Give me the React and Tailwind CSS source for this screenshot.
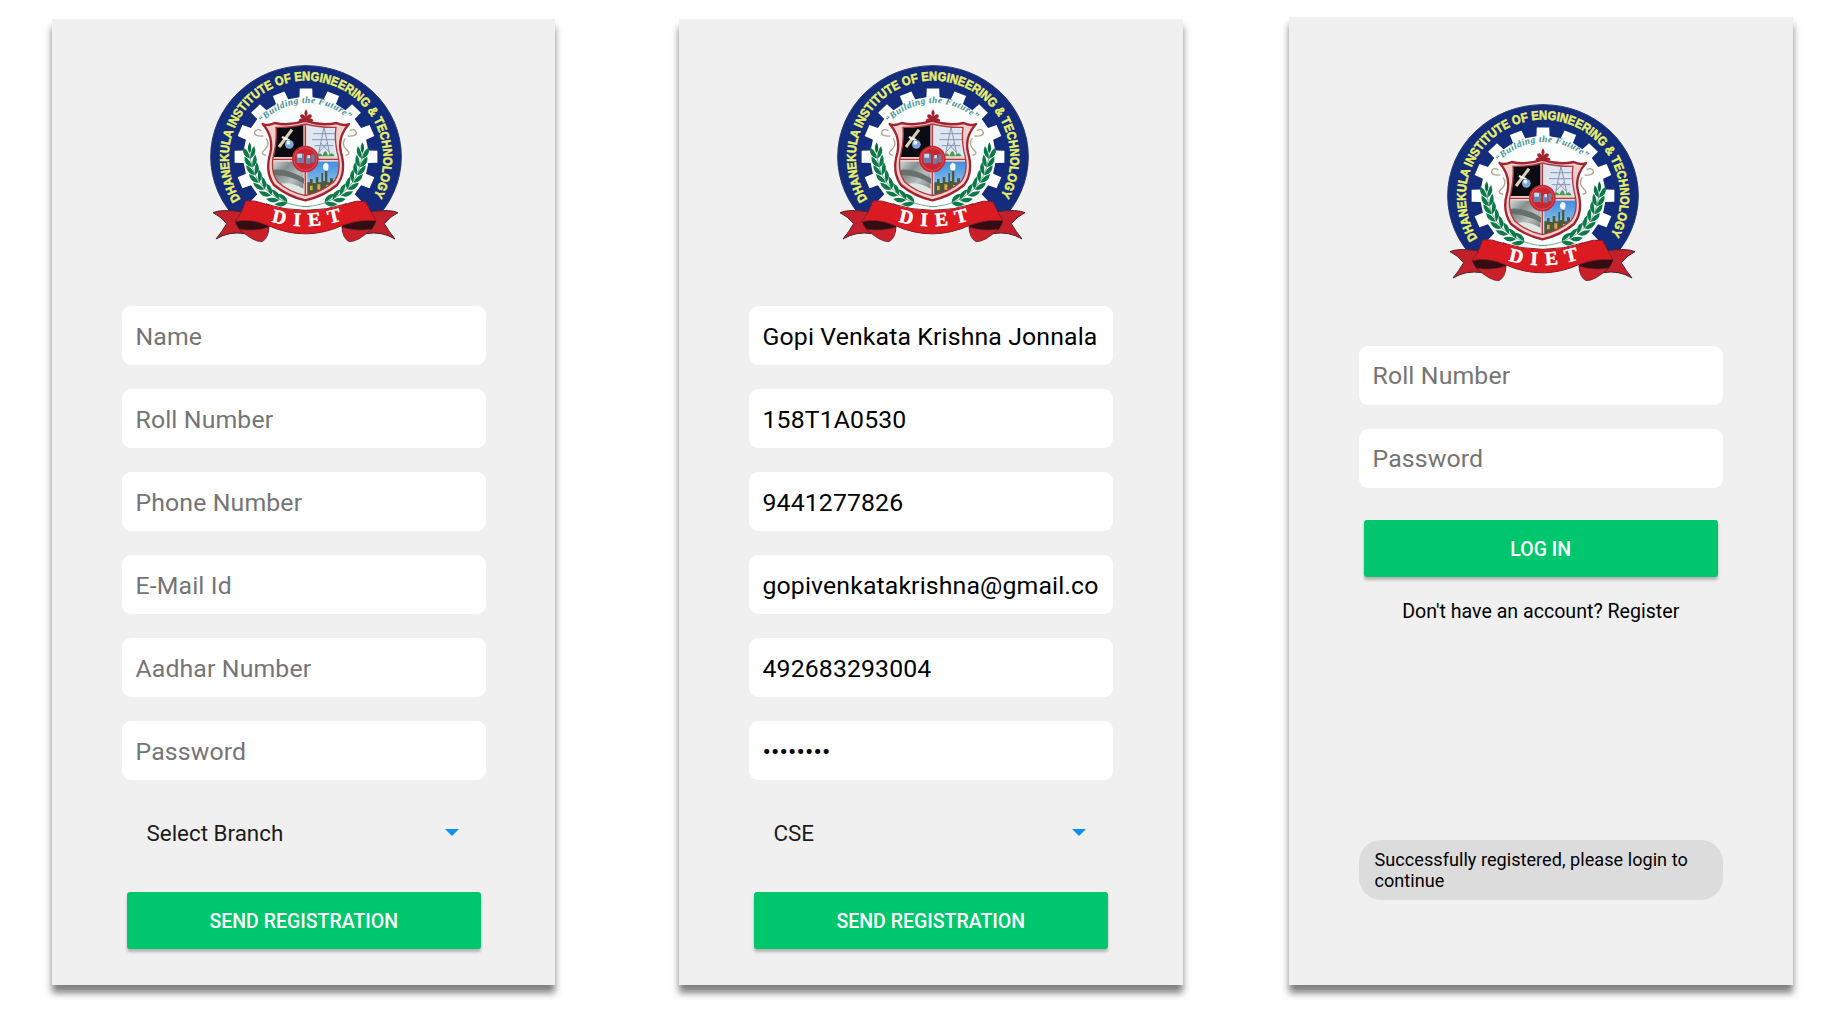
import React from "react";

const CX = 318;
const CY = 317;

function polar(r, deg) {
  const a = (deg * Math.PI) / 180;
  return [CX + r * Math.cos(a), CY + r * Math.sin(a)];
}

// Sixteen-tooth gear outline
const gearPoints = Array.from({ length: 16 }, (_, i) => {
  const c = i * 22.5;
  return [polar(188, c - 6), polar(215, c - 5), polar(215, c + 5), polar(188, c + 6)];
})
  .flat()
  .map((p) => p.map((n) => n.toFixed(1)).join(","))
  .join(" ");

// Leaves of the left laurel: x, y, rotation
const leaves = [
  [149, 296, -4], [154, 322, -8], [161, 346, -14], [171, 369, -22], [185, 391, -32], [203, 411, -44], [225, 427, -58], [248, 438, -70],
];

function Laurel({ flip }) {
  return (
    <g transform={flip ? "translate(636 0) scale(-1 1)" : undefined}>
      <path d="M149 285 Q152 400 262 444 Q300 456 330 455" fill="none" stroke="#5b9c7c" strokeWidth="2.5" />
      {leaves.map(([x, y, r]) => (
        <g key={y} transform={`translate(${x} ${y}) rotate(${r})`} fill="#0b7a48">
          <path d="M0 15 Q-24 7 -18 -20 Q-1 -8 0 15Z" />
          <path d="M1 15 Q24 4 15 -22 Q2 -8 1 15Z" />
        </g>
      ))}
      <path d="M149 262 q-11 18 0 32 q10 -14 0 -32Z" fill="#0b6a3f" />
    </g>
  );
}

function RibbonTail({ flip }) {
  return (
    <g transform={flip ? "translate(633 0) scale(-1 1)" : undefined}>
      <path d="M39 473 Q62 462 124 470 L110 510 L134 536 Q88 528 48 552 Q66 530 80 506 Q62 484 39 473Z" fill="#c4202b" stroke="#4b2530" strokeWidth="3" />
      <path d="M104 498 Q150 488 208 511 L206 530 Q160 544 118 524Z" fill="#330d12" />
      <path d="M118 522 Q165 530 207 516 Q206 550 186 560 Q160 562 118 522Z" fill="#c9202a" stroke="#5a2028" strokeWidth="2" />
    </g>
  );
}

function Crest() {
  return (
    <svg viewBox="0 0 630 600" className="block h-[200px] w-[210px] shrink-0" role="img" aria-label="DIET">
      <defs>
        <clipPath id="ring"><path d="M0 0H630V485L500 505H130L0 485Z" /></clipPath>
        <clipPath id="shield"><path d="M228 217 Q275 218 316 207 Q360 218 408 217 Q403 250 411 290 Q428 350 400 382 Q365 412 316 422 Q268 412 234 382 Q208 345 222 295 Q231 255 228 217Z" /></clipPath>
        <linearGradient id="town" x1="0" y1="0" x2="0" y2="1">
          <stop offset="0" stopColor="#3f8fe0" />
          <stop offset="1" stopColor="#b9dcf5" />
        </linearGradient>
        <linearGradient id="river" x1="0" y1="0" x2="1" y2="1">
          <stop offset="0" stopColor="#e8efec" />
          <stop offset=".35" stopColor="#848f8e" />
          <stop offset=".6" stopColor="#b9c0bf" />
          <stop offset="1" stopColor="#5b6663" />
        </linearGradient>
        <path id="ringText" d="M122 433 A232 232 0 1 1 514 433" />
        <path id="motto" d="M186 203 A184 184 0 0 1 456 203" />
        <path id="banner" d="M214 500 Q318 530 434 494" />
      </defs>

      <g transform="translate(0 2.3) scale(1 .955)">
        <g clipPath="url(#ring)">
          <circle cx={CX} cy={CY} r="286" fill="#142c7c" stroke="#26366f" strokeWidth="3" />
          <polygon points={gearPoints} fill="#fff" />
          <circle cx={CX} cy={CY} r="172" fill="#fbfefd" />
        </g>
      </g>
      <text fill="#e9f06a" stroke="#e9f06a" strokeWidth="1.6" fontFamily="'Liberation Sans Narrow', 'Liberation Sans', sans-serif" fontWeight="700" fontSize="38">
        <textPath href="#ringText" textLength="978" lengthAdjust="spacingAndGlyphs">DHANEKULA INSTITUTE OF ENGINEERING &amp; TECHNOLOGY</textPath>
      </text>
      <text fill="#3c9092" fontFamily="'Liberation Serif', serif" fontStyle="italic" fontWeight="700" fontSize="28">
        <textPath href="#motto" textLength="288" lengthAdjust="spacing">“Building the Future”</textPath>
      </text>

      <Laurel />
      <Laurel flip />

      {/* scroll ornaments beside the shield */}
      <g fill="none" stroke="#b3a58d" strokeWidth="4">
        <path d="M190 243 q-28 2 -26 -12 q6 -12 20 -4 M198 250 q14 18 -4 34 q-16 14 4 17" />
        <path d="M443 243 q28 2 26 -12 q-6 -12 -20 -4 M436 250 q-14 18 4 34 q16 14 -4 17" />
      </g>

      {/* shield */}
      <path d="M188 207 Q205 214 224 204 Q270 214 316 197 Q362 214 410 204 Q428 214 447 207 Q412 246 423 292 Q440 352 411 390 Q370 424 316 436 Q262 424 222 390 Q194 350 211 294 Q222 246 188 207Z" fill="#f0cfcc" stroke="#a3232f" strokeWidth="7" strokeLinejoin="round" />
      <g clipPath="url(#shield)">
        <rect x="200" y="200" width="110" height="106" fill="#0c0b12" />
        <path d="M237 276 L276 224" stroke="#d9d3b0" strokeWidth="9" />
        <path d="M246 246 L268 256" stroke="#f2f2f2" strokeWidth="7" />
        <circle cx="268" cy="268" r="13" fill="#7ea6d6" />
        <circle cx="265" cy="263" r="6" fill="#eaf2fa" />
        <rect x="322" y="200" width="110" height="106" fill="#dfe6f3" />
        <path d="M372 216 L355 300 M372 216 L390 300 M340 236 H404 M336 254 H408 M344 272 H400 M362 264 L388 292 M382 264 L356 292" stroke="#8798ad" strokeWidth="3" fill="none" />
        <path d="M350 304 q8 -18 18 -2 q8 -26 16 0 q12 -16 20 2Z" fill="#4e9a4b" />
        <rect x="200" y="320" width="110" height="110" fill="url(#river)" />
        <path d="M215 345 Q260 338 312 370 V386 Q260 356 212 362Z" fill="#66706d" />
        <path d="M215 395 Q262 372 312 402 V428 H215Z" fill="#dfe7e5" />
        <rect x="322" y="320" width="110" height="110" fill="url(#town)" />
        <path d="M372 345 q-8 -14 4 -22 q16 2 6 24Z" fill="#f4f8fb" />
        <path d="M322 382 h8 v-10 h8 v12 h9 v-18 h8 v16 h9 v-28 h5 v24 h6 v-30 h7 v34 h8 v-12 h9 v12 h12 v44 h-89Z" fill="#4a5a3a" />
        <path d="M330 392 h8 v14 h-8Z M352 388 h9 v16 h-9Z M378 390 h10 v14 h-10Z" fill="#dba54a" />
      </g>
      <path d="M228 217 Q275 218 316 207 Q360 218 408 217 Q403 250 411 290 Q428 350 400 382 Q365 412 316 422 Q268 412 234 382 Q208 345 222 295 Q231 255 228 217Z M316 207V422 M220 313H414" fill="none" stroke="#b03a42" strokeWidth="4" />
      <circle cx="316" cy="312" r="40" fill="#c92632" />
      <circle cx="316" cy="312" r="34" fill="none" stroke="#e0666b" strokeWidth="2" />
      <path d="M290 296 h22 v28 h-22Z M318 304 h14 v22 h-14Z M334 298 h10 v24 h-10Z" fill="#6e7fa3" />
      <path d="M292 296 h14 v12 h-14Z M322 300 h8 v10 h-8Z" fill="#c8dcec" />
      <path d="M318 163 q9 12 1 22 q8 -12 16 -5 q2 10 -9 10 q12 -2 14 8 q-22 8 -44 0 q2 -10 14 -8 q-11 0 -9 -10 q8 -7 16 5 q-8 -10 1 -22Z" fill="#a3202d" />

      <RibbonTail />
      <RibbonTail flip />
      <path d="M137 438 Q163 434 192 446 Q318 486 442 446 Q470 434 497 440 Q510 468 528 497 Q480 492 430 510 Q318 562 205 512 Q150 488 105 500 Q128 472 137 438Z" fill="#dc1a22" stroke="#8c1a26" strokeWidth="3" />
      <text fill="#fff" fontFamily="'Liberation Serif', serif" fontWeight="700" fontSize="58" stroke="#fff" strokeWidth="1.5">
        <textPath href="#banner" textLength="214" lengthAdjust="spacing">DIET</textPath>
      </text>
    </svg>
  );
}

function Phone({ className, children }) {
  return (
    <section className={`flex flex-col bg-[#f0f0f0] shadow-[0_8px_7px_rgba(0,0,0,0.5)] ${className}`}>
      {children}
    </section>
  );
}

function Field({ value, filled }) {
  return (
    <div className={`flex h-[59px] items-center overflow-hidden rounded-[9px] bg-white px-[14px] text-[24.8px] leading-[28px] tracking-[0.14px] whitespace-nowrap ${filled ? "text-black" : "text-[#757575]"}`}>
      <span className="pt-[2px]">{value}</span>
    </div>
  );
}

function Button({ children, className }) {
  return (
    <button className={`mx-[5.5px] flex h-[57px] items-center justify-center rounded-[3px] bg-[#00c66d] pt-[3px] text-[19.5px] font-medium text-white shadow-[0_3px_3px_rgba(0,0,0,0.25)] ${className}`}>
      {children}
    </button>
  );
}

function Registration({ className, fields, filled, branch }) {
  return (
    <Phone className={`h-[966px] ${className}`}>
      <div className="ml-[148px] pt-[36px]"><Crest /></div>
      <form className="mt-[51px] ml-[69.5px] flex w-[364.5px] flex-col">
        <div className="flex flex-col gap-6">
          {fields.map((f) => (
            <Field key={f} value={f} filled={filled} />
          ))}
        </div>
        <div className="mt-[36px] flex h-[34px] items-center justify-between pr-[27px] pl-[25px] text-[22.4px] leading-[34px] text-[#1c1c1c]">
          <span>{branch}</span>
          <svg viewBox="0 0 14 7" className="mb-px h-[7px] w-[14px]"><path d="M0 0H14L7 7Z" fill="#0a91f2" /></svg>
        </div>
        <Button className="mt-[42px]">SEND REGISTRATION</Button>
      </form>
    </Phone>
  );
}

export default function App() {
  return (
    <main className="flex h-[1021px] w-[1842px] items-start overflow-hidden bg-white pl-[52px] font-['Roboto',sans-serif]">
      <Registration
        className="mt-[19px] w-[503px]"
        fields={["Name", "Roll Number", "Phone Number", "E-Mail Id", "Aadhar Number", "Password"]}
        branch="Select Branch"
      />
      <Registration
        className="mt-[19px] ml-[124px] w-[504px]"
        filled
        fields={["Gopi Venkata Krishna Jonnala", "158T1A0530", "9441277826", "gopivenkatakrishna@gmail.co", "492683293004", "••••••••"]}
        branch="CSE"
      />
      <Phone className="mt-[17px] ml-[106px] h-[968px] w-[504px]">
        <div className="ml-[148px] pt-[77px]"><Crest /></div>
        <div className="mt-[51.5px] ml-[69.5px] flex w-[364.5px] flex-col">
          <div className="flex flex-col gap-6">
            <Field value="Roll Number" />
            <Field value="Password" />
          </div>
          <Button className="mt-[32px]">LOG IN</Button>
          <p className="mt-[23.5px] text-center text-[19.6px] leading-[24px] text-black">Don't have an account? Register</p>
          <div className="mt-[215.5px] flex h-[60px] items-center rounded-[22px] bg-[#dcdcdc] px-[16px] pt-[2px] text-[18.1px] leading-[20.5px] tracking-[0.03px] whitespace-nowrap text-black">
            <p>Successfully registered, please login to<br />continue</p>
          </div>
        </div>
      </Phone>
    </main>
  );
}
